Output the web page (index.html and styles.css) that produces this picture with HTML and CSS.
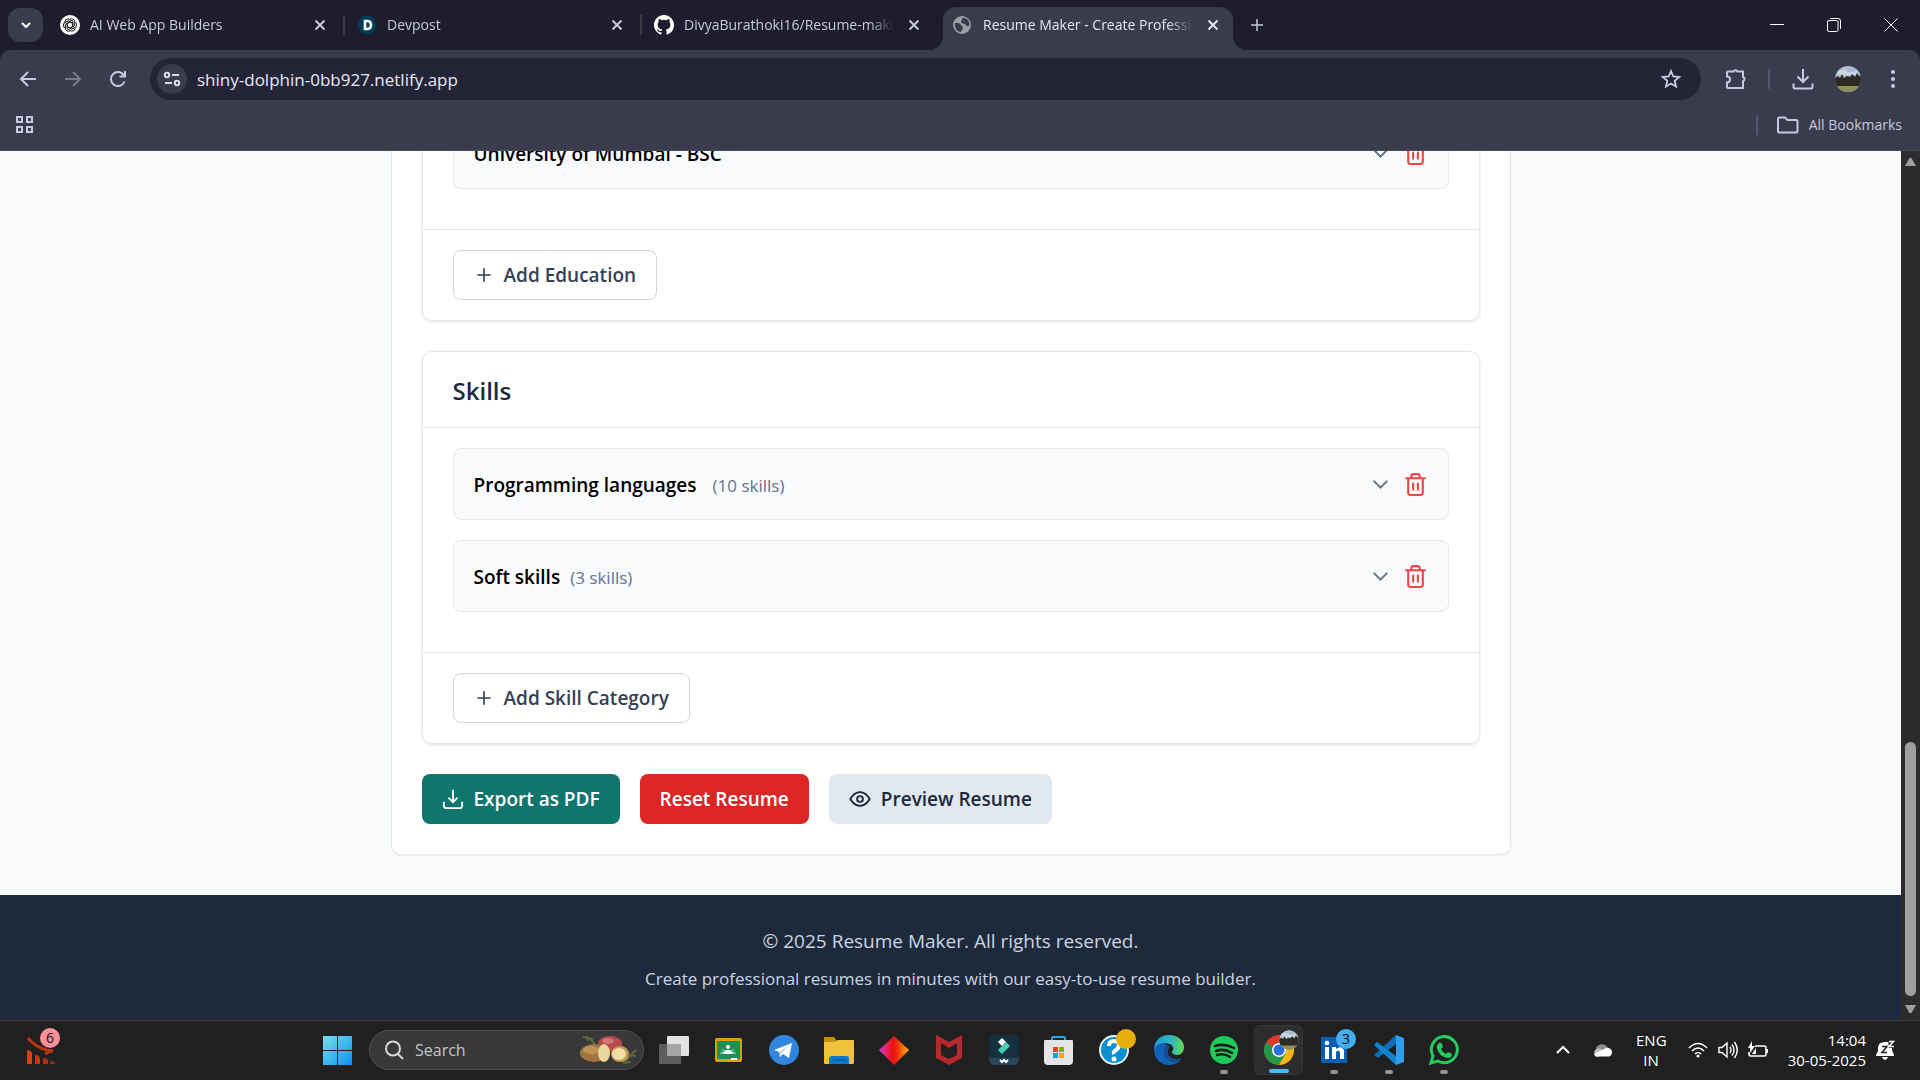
FILE: index.html
```html
<!DOCTYPE html>
<html lang="en">
<head>
  <meta charset="UTF-8" />
  <meta name="viewport" content="width=device-width, initial-scale=1.0"/>
  <title>Resume Maker</title>
  <link rel="stylesheet" href="styles.css">
</head>
<body>
  <!-- Shared icons -->
  <svg class="sprite" aria-hidden="true">
    <symbol id="i-close" viewBox="0 0 12 12"><path d="M1.5 1.5l9 9M10.5 1.5l-9 9"/></symbol>
    <symbol id="i-plus" viewBox="0 0 24 24"><path d="M12 4v16M4 12h16"/></symbol>
    <symbol id="i-chevron" viewBox="0 0 24 24"><path d="M6 9l6 6 6-6" stroke-linecap="round"/></symbol>
    <symbol id="i-trash" viewBox="0 0 24 24"><path d="M3 6h18M19 6v14a2 2 0 0 1-2 2H7a2 2 0 0 1-2-2V6M8 6V4a2 2 0 0 1 2-2h4a2 2 0 0 1 2 2v2M9.700 11v6M14.300 11v6" stroke-linecap="round"/></symbol>
    <symbol id="i-photo" viewBox="0 0 26 26">
      <clipPath id="round"><circle cx="13" cy="13" r="13"/></clipPath>
      <g clip-path="url(#round)">
        <rect width="26" height="26" fill="#a9bdd6"/>
        <path d="M3 5q5-3 9 0t10-1v5H3z" fill="#ccd3dc"/>
        <path d="M0 12l3-2 2 2 2-4 2 4 3-2 3 1 2-3 3 3 2-4 2 3 2-1v12H0z" fill="#2b2a20"/>
        <path d="M0 20h26v6H0z" fill="#8b8f55"/>
      </g>
    </symbol>
  </svg>

  <header class="browser">
    <div class="tab-strip">
      <button class="tab-search" aria-label="Search tabs">
        <svg class="line" width="14" height="14" viewBox="0 0 14 14"><path d="M3 5l4 4 4-4" stroke-width="2"/></svg>
      </button>
      <div class="tab">
        <svg width="20" height="20" viewBox="0 0 20 20">
          <circle cx="10" cy="10" r="10" fill="#fff"/>
          <g fill="none" stroke="#222" stroke-width="1">
            <path id="petal" d="M10 4.200a3 3 0 0 1 4.600 2.400v4l-4.500 2.600-2.600-1.500"/>
            <use href="#petal" transform="rotate(60 10 10)"/>
            <use href="#petal" transform="rotate(120 10 10)"/>
            <use href="#petal" transform="rotate(180 10 10)"/>
            <use href="#petal" transform="rotate(240 10 10)"/>
            <use href="#petal" transform="rotate(300 10 10)"/>
          </g>
        </svg>
        <span class="tab-title">AI Web App Builders</span>
        <button class="tab-close" aria-label="Close tab"><svg class="line" width="12" height="12"><use href="#i-close"/></svg></button>
      </div>
      <div class="tab">
        <svg width="20" height="20" viewBox="0 0 20 20"><path d="M5 1h10l5 9-5 9H5l-5-9z" fill="#003e54"/><path d="M8 6h2q4 0 4 4t-4 4H8z" fill="none" stroke="#fff" stroke-width="2.600"/></svg>
        <span class="tab-title">Devpost</span>
        <button class="tab-close" aria-label="Close tab"><svg class="line" width="12" height="12"><use href="#i-close"/></svg></button>
      </div>
      <div class="tab last">
        <svg width="20" height="20" viewBox="0 0 16 16"><path fill="#fff" d="M8 0C3.580 0 0 3.580 0 8c0 3.540 2.290 6.530 5.470 7.590.4.070.55-.17.55-.38 0-.19-.01-.82-.01-1.490-2.010.37-2.530-.49-2.690-.94-.09-.23-.48-.94-.82-1.130-.28-.15-.68-.52-.01-.53.63-.01 1.080.58 1.230.82.72 1.210 1.870.87 2.330.66.07-.52.28-.87.51-1.070-1.780-.2-3.640-.89-3.640-3.950 0-.87.31-1.590.82-2.150-.08-.2-.36-1.020.08-2.120 0 0 .67-.21 2.200.82a7.600 7.600 0 0 1 4 0c1.530-1.040 2.200-.82 2.200-.82.44 1.100.16 1.920.08 2.120.51.56.82 1.270.82 2.150 0 3.070-1.870 3.750-3.650 3.950.29.25.54.73.54 1.480 0 1.070-.01 1.930-.01 2.200 0 .21.15.46.55.38A8 8 0 0 0 16 8c0-4.420-3.580-8-8-8z"/></svg>
        <span class="tab-title">DivyaBurathoki16/Resume-make</span>
        <button class="tab-close" aria-label="Close tab"><svg class="line" width="12" height="12"><use href="#i-close"/></svg></button>
      </div>
      <div class="tab active">
        <svg width="20" height="20" viewBox="0 0 20 20"><circle cx="9" cy="10" r="9" fill="#9aa0a6"/><path d="M2 8c3 0 5 0 6 2s2 1 2 3-2 2-2 4c-4 0-6.500-4-6-9zM9 3c1 2-1 2-1 4s4 1 5 3 3 1 3.500 0C16.500 5 13 2.500 9 3z" fill="#3a3b4d"/></svg>
        <span class="tab-title">Resume Maker - Create Professio</span>
        <button class="tab-close" aria-label="Close tab"><svg class="line" width="12" height="12"><use href="#i-close"/></svg></button>
      </div>
      <button class="new-tab" aria-label="New tab"><svg class="line" width="18" height="18" stroke-width="3"><use href="#i-plus"/></svg></button>

      <div class="window-controls">
        <button aria-label="Minimize"><svg class="line" width="14" height="14"><path d="M0 6.500h14" stroke-width="1"/></svg></button>
        <button aria-label="Restore"><svg class="line" width="14" height="14"><path d="M.5 4a1.500 1.500 0 0 1 1.500-1.500h7.500a1.500 1.500 0 0 1 1.500 1.500v8a1.500 1.500 0 0 1-1.500 1.500H2a1.500 1.500 0 0 1-1.500-1.500zM3 .5h8a2.500 2.500 0 0 1 2.500 2.500v8" stroke-width="1"/></svg></button>
        <button aria-label="Close"><svg class="line" width="14" height="14"><path d="M.5.5l13 13M13.500.5l-13 13" stroke-width="1"/></svg></button>
      </div>
    </div>

    <div class="toolbar">
      <button class="tool" aria-label="Back"><svg class="line" width="18" height="18"><path d="M17 9H2M9 2L2 9l7 7" stroke-width="2"/></svg></button>
      <button class="tool off" aria-label="Forward"><svg class="line" width="18" height="18"><path d="M1 9h15M9 2l7 7-7 7" stroke-width="2"/></svg></button>
      <button class="tool" aria-label="Reload"><svg class="line" width="18" height="18"><path d="M15.500 11.500A7 7 0 1 1 15 5.500M16 1v5.500h-5.500" stroke-width="2"/></svg></button>

      <div class="address">
        <button class="site-info" aria-label="Site information">
          <svg class="line" width="18" height="18"><g stroke-width="2"><circle cx="4" cy="5" r="2.200"/><path d="M9 5h7M2 13h7"/><circle cx="14" cy="13" r="2.200"/></g></svg>
        </button>
        <input type="text" aria-label="Address" value="shiny-dolphin-0bb927.netlify.app"/>
        <button class="star" aria-label="Bookmark this tab">
          <svg class="line" width="20" height="20" viewBox="0 0 20 20"><path d="M10 2l2.300 5.500 6 .5-4.600 3.900 1.400 5.800L10 14.600l-5.100 3.100 1.400-5.800L1.700 8l6-.5z" stroke-width="1.800"/></svg>
        </button>
      </div>

      <button class="tool" aria-label="Extensions"><svg class="line" width="24" height="24"><path d="M4 4.500h5.500a2.200 2.200 0 0 1 4 0H19v5.500a2.200 2.200 0 0 1 0 4.200V21H4a1 1 0 0 1-1-1v-4.500a2.800 2.800 0 0 0 0-6V5.500a1 1 0 0 1 1-1z" stroke-width="2"/></svg></button>
      <span class="tool-divider"></span>
      <button class="tool" aria-label="Downloads"><svg class="line" width="22" height="22"><path d="M11 1v13M5.500 8.500L11 14l5.500-5.500M1.500 15.500V19a1.500 1.500 0 0 0 1.500 1.500h16a1.500 1.500 0 0 0 1.500-1.500v-3.500" stroke-width="2"/></svg></button>
      <button class="tool" aria-label="Profile"><svg width="26" height="26"><use href="#i-photo"/></svg></button>
      <button class="tool" aria-label="Menu"><svg width="6" height="20" fill="currentColor"><circle cx="3" cy="3" r="2"/><circle cx="3" cy="10" r="2"/><circle cx="3" cy="17" r="2"/></svg></button>
    </div>

    <div class="bookmarks">
      <button class="apps-grid" aria-label="Apps"><svg class="line" width="20" height="20"><path d="M2 2h5v5H2zM12 2h5v5h-5zM2 12h5v5H2zM12 12h5v5h-5z" stroke-width="2"/></svg></button>
      <button class="all-bookmarks">
        <svg class="line" width="22" height="18"><path d="M1 3a1.500 1.500 0 0 1 1.500-1.500H8l2.500 2.500H19a1.500 1.500 0 0 1 1.500 1.500V15a1.500 1.500 0 0 1-1.500 1.500H2.500A1.500 1.500 0 0 1 1 15z" stroke-width="2"/></svg>
        All Bookmarks
      </button>
    </div>
  </header>

  <div class="viewport">
    <div class="page">
      <main class="resume">
        <section class="card">
          <div class="card-body">
            <div class="item">
              <h3>University of Mumbai - BSC</h3>
              <button class="icon-btn" aria-label="Expand"><svg class="line" width="25" height="25"><use href="#i-chevron"/></svg></button>
              <button class="icon-btn danger" aria-label="Delete"><svg class="line" width="25" height="25"><use href="#i-trash"/></svg></button>
            </div>
          </div>
          <div class="card-foot">
            <button class="btn outline"><svg class="line" width="20" height="20"><use href="#i-plus"/></svg>Add Education</button>
          </div>
        </section>

        <section class="card">
          <h2>Skills</h2>
          <div class="card-body">
            <div class="item">
              <h3>Programming languages</h3>
              <span class="count wide">(10 skills)</span>
              <button class="icon-btn" aria-label="Expand"><svg class="line" width="25" height="25"><use href="#i-chevron"/></svg></button>
              <button class="icon-btn danger" aria-label="Delete"><svg class="line" width="25" height="25"><use href="#i-trash"/></svg></button>
            </div>
            <div class="item">
              <h3>Soft skills</h3>
              <span class="count">(3 skills)</span>
              <button class="icon-btn" aria-label="Expand"><svg class="line" width="25" height="25"><use href="#i-chevron"/></svg></button>
              <button class="icon-btn danger" aria-label="Delete"><svg class="line" width="25" height="25"><use href="#i-trash"/></svg></button>
            </div>
          </div>
          <div class="card-foot">
            <button class="btn outline"><svg class="line" width="20" height="20"><use href="#i-plus"/></svg>Add Skill Category</button>
          </div>
        </section>

        <div class="actions">
          <button class="btn export"><svg class="line" width="22" height="22" viewBox="0 0 24 24"><path d="M12 2v13M7 10.500l5 5 5-5M2 15v4a3 3 0 0 0 3 3h14a3 3 0 0 0 3-3v-4"/></svg>Export as PDF</button>
          <button class="btn reset">Reset Resume</button>
          <button class="btn preview"><svg class="line" width="22" height="22" viewBox="0 0 24 24"><path d="M1.500 12S5 4.500 12 4.500 22.500 12 22.500 12 19 19.500 12 19.500 1.500 12 1.500 12z"/><circle cx="12" cy="12" r="3.200"/></svg>Preview Resume</button>
        </div>
      </main>

      <footer class="site-footer">
        <p>© 2025 Resume Maker. All rights reserved.</p>
        <p class="small">Create professional resumes in minutes with our easy-to-use resume builder.</p>
      </footer>
    </div>

    <div class="scrollbar">
      <svg width="13" height="10"><path d="M5.500 1h2L12 9H1z"/></svg>
      <div class="track"><div class="thumb"></div></div>
      <svg width="13" height="10"><path d="M1 1h11L7.500 9h-2z"/></svg>
    </div>
  </div>

  <div class="taskbar">
    <div class="widgets">
      <button class="widget-btn" aria-label="Widgets">
        <svg width="30" height="30">
          <path d="M2 3q7 9 19 12l6 1M19 19l8-4" fill="none" stroke="#b8350f" stroke-width="3"/>
          <path d="M1 15q5 0 5 4v10H1z" fill="#d8400f"/><path d="M9 20q5 0 5 4v5H9z" fill="#c4380f"/><path d="M17 23q5 0 5 3v3h-5z" fill="#b0300f"/><path d="M24 26q5 0 5 3h-5z" fill="#9a290f"/>
        </svg>
        <span class="badge pink">6</span>
      </button>
    </div>

    <button class="app" aria-label="Start">
      <svg width="30" height="30"><defs><linearGradient id="win" x1="0" y1="0" x2="1" y2="1"><stop offset="0" stop-color="#7be0ea"/><stop offset="1" stop-color="#0a8ff5"/></linearGradient><mask id="panes"><path fill="#fff" d="M0 1h14v14H0zM15 1h14v14H15zM0 16h14v14H0zM15 16h14v14H15z"/></mask></defs><rect width="30" height="30" fill="url(#win)" mask="url(#panes)"/></svg>
    </button>

    <label class="search">
      <svg class="line" width="20" height="20"><circle cx="8" cy="8.500" r="7" stroke-width="2"/><path d="M13 14l5 5" stroke-width="2"/></svg>
      <input type="text" placeholder="Search"/>
      <svg width="58" height="30">
        <path d="M4 2q8 0 12 8M8 1l1 5M12 3l2 4M46 27q6-8 11-12M50 20l7 1M44 28l8-1" stroke="#5c6b3a" stroke-width="2" fill="none"/>
        <ellipse cx="31" cy="9" rx="12" ry="8" fill="#b54848"/><ellipse cx="29" cy="6" rx="6" ry="3" fill="#d27874"/>
        <ellipse cx="15" cy="18" rx="14" ry="9" fill="#a3753e"/><ellipse cx="12" cy="15" rx="8" ry="4" fill="#bd9355"/>
        <ellipse cx="25" cy="18" rx="6" ry="9" fill="#ead7a0"/><ellipse cx="41" cy="19" rx="9" ry="8" fill="#c59a50"/><ellipse cx="40" cy="19" rx="7" ry="6" fill="#f0dea6"/>
      </svg>
    </label>

    <button class="app" aria-label="Task view">
      <svg width="30" height="30"><rect x="8" y="1" width="22" height="20" rx="1" fill="#e2e2e2"/><rect y="9" width="22" height="20" rx="1" fill="#5d5d5d"/><path d="M8 9h14v12H8z" fill="#a6a6a6"/></svg>
    </button>
    <button class="app" aria-label="Classroom">
      <svg width="30" height="30"><rect x="1" y="3" width="27" height="24" rx="2" fill="#d9a009"/><rect x="3" y="6" width="23" height="18" fill="#1e8e57"/><circle cx="14" cy="12" r="2" fill="#fff"/><path d="M9 19q0-4 5-4t5 4z" fill="#fff"/><circle cx="9" cy="15" r="1" fill="#8ed0ad"/><circle cx="19" cy="15" r="1" fill="#8ed0ad"/><path d="M6 19q1-3 4-2v2zM22 19q-1-3-4-2v2z" fill="#8ed0ad"/><path d="M17 23h6v2h-6z" fill="#fff"/></svg>
    </button>
    <button class="app" aria-label="Telegram">
      <svg width="30" height="30"><circle cx="15" cy="15" r="15" fill="#2f86dc"/><path d="M5 15l18-7-3 15-6-4-3 3-1-5z" fill="#fff"/><path d="M10 17l9-6-7 8-1 3z" fill="#b9d5ee"/></svg>
    </button>
    <button class="app" aria-label="File Explorer">
      <svg width="30" height="30"><path d="M0 3q0-1 1-1h9l3 4h16v8H0z" fill="#c98f10"/><path d="M0 7h11l3-2h15q1 0 1 1v22q0 1-1 1H1q-1 0-1-1z" fill="#f2c13c"/><path d="M5 29v-5q0-3 3-3h14q3 0 3 3v5z" fill="#0f78cf"/><path d="M9 25h13" stroke="#0a4a8a" stroke-width="1"/></svg>
    </button>
    <button class="app" aria-label="Office">
      <svg width="30" height="30"><defs><linearGradient id="dia"><stop offset="0" stop-color="#d63fd0"/><stop offset=".45" stop-color="#ee1010"/><stop offset=".6" stop-color="#ee2a08"/><stop offset="1" stop-color="#f5ba14"/></linearGradient></defs><path d="M15 1l15 14-15 15L0 15z" fill="url(#dia)"/></svg>
    </button>
    <button class="app" aria-label="McAfee">
      <svg width="30" height="30"><path d="M2 0l13 7 13-7v23l-13 7-13-7zM7 8v12l8 4 8-4V8l-8 5z" fill="#b52a2c" fill-rule="evenodd"/></svg>
    </button>
    <button class="app" aria-label="Filmora">
      <svg width="30" height="30"><rect width="30" height="30" rx="6" fill="#17303f"/><path d="M0 23h30v1a6 6 0 0 1-6 6H6a6 6 0 0 1-6-6z" fill="#2b485b"/><path d="M13 3l4 4-4 4-4-4z" fill="#fff"/><path d="M17 7l4 4-8 8-4-4z" fill="#4ad0ae"/><path d="M11 25l2 2 2-2 2 2 2-2" stroke="#fff" stroke-width="2" fill="none"/></svg>
    </button>
    <button class="app" aria-label="Microsoft Store">
      <svg width="30" height="30"><path d="M8 6V3q0-1 1-1h11q1 0 1 1v3" fill="none" stroke="#26a8dd" stroke-width="2"/><path d="M0 6q0-1 1-1h27q1 0 1 1v20q0 4-4 4H4q-4 0-4-4z" fill="#e4e4e4"/><path d="M9 12h5v5H9z" fill="#e0492a"/><path d="M15 12h5v5h-5z" fill="#78b000"/><path d="M9 18h5v5H9z" fill="#189fe2"/><path d="M15 18h5v5h-5z" fill="#f3a600"/></svg>
    </button>
    <button class="app" aria-label="Help">
      <svg width="30" height="30"><circle cx="15" cy="15" r="14" fill="#0a8fcf" stroke="#e8f2f8" stroke-width="2"/><path d="M10 11q0-5 5-5t5 4q0 3-3 5t-2 4" fill="none" stroke="#fff" stroke-width="4"/><circle cx="15" cy="24" r="2.500" fill="#fff"/></svg>
      <span class="badge gold"></span>
    </button>
    <button class="app" aria-label="Edge">
      <svg width="30" height="30"><defs><linearGradient id="edge"><stop offset="0" stop-color="#2397d8"/><stop offset=".6" stop-color="#2fb9c0"/><stop offset="1" stop-color="#6bd83f"/></linearGradient></defs><path d="M0 15C0 6 6 0 15 0c9 0 15 6 15 12 0 5-3 8-7 8-3 0-5-1-5-3 0-1 2-2 1-5C17 7 6 6 0 15z" fill="url(#edge)"/><path d="M0 15C2 8 9 7 13 10c-4 2-5 12 3 16 5 2 9 0 12-3-3 5-8 7-13 7C6 30 0 23 0 15z" fill="#0f62b8"/><path d="M13 10c-5 3-5 14 3 16 5 2 9 0 12-3-9 3-16-2-14-8 1-3 2-3 1-4z" fill="#174e93"/></svg>
    </button>
    <button class="app running" aria-label="Spotify">
      <svg width="30" height="30"><circle cx="15" cy="15" r="14" fill="#1ecb5a"/><path d="M6 11q9-3 19 2M7 16q8-3 16 2M8 20q7-2 13 2" fill="none" stroke="#1d1d1d" stroke-width="2.500" stroke-linecap="round"/></svg>
    </button>
    <button class="app current" aria-label="Chrome">
      <svg width="30" height="30"><circle cx="15" cy="15" r="15" fill="#e0382e"/><path d="M2 7.500A15 15 0 0 0 15 30l7-11-7-4z" fill="#25964a"/><path d="M15 8h13.300A15 15 0 0 1 15 30l7-12z" fill="#f2b90f"/><circle cx="15" cy="15" r="7" fill="#fff"/><circle cx="15" cy="15" r="5.500" fill="#2a6fe0"/></svg>
      <svg class="badge" width="20" height="20"><use href="#i-photo"/></svg>
    </button>
    <button class="app running" aria-label="LinkedIn">
      <svg width="30" height="30"><rect x="2" y="2" width="26" height="26" rx="1" fill="#0a5fb5"/><path d="M6 12h4v12H6zM13 12h4v2q5-4 8 1v9h-4v-7q-2-3-4 0v7h-4z" fill="#fff"/><circle cx="8" cy="8" r="2.300" fill="#fff"/></svg>
      <span class="badge blue">3</span>
    </button>
    <button class="app running" aria-label="Visual Studio Code">
      <svg width="30" height="30"><path d="M22 0v9L4 23l-4-3z" fill="#0f6fb5"/><path d="M0 10l3-3 19 14v9z" fill="#1583cc"/><path d="M22 0l8 3v24l-8 3z" fill="#2b9fea"/></svg>
    </button>
    <button class="app running" aria-label="WhatsApp">
      <svg width="30" height="30"><path d="M2 28l2-7A13 13 0 1 1 9 26z" fill="none" stroke="#25c95d" stroke-width="3"/><path d="M9 9q2-3 4 0l1 3-2 2q2 4 5 5l2-2 4 2q0 4-4 4-9-1-11-10-1-2 1-4z" fill="#25c95d"/></svg>
    </button>

    <div class="tray">
      <svg class="line" width="14" height="14"><path d="M1 10l6-6 6 6" stroke-width="2"/></svg>
      <svg class="cloud" width="20" height="14"><path d="M3 8a6 5 0 0 1 12-3l-6 4z" fill="#8b8b8b"/><path d="M1 9a5 5 0 0 1 7-3l8 5-13 3z" fill="#c4c4c4"/><path d="M1 11l12-6a4.500 4.500 0 0 1 3 8.500H4a3 3 0 0 1-3-2.500z" fill="#fff"/></svg>
      <div class="lang">ENG<br>IN</div>
      <svg class="line" width="20" height="16"><path d="M1 6q9-9 18 0M4 9q6-6 12 0M7 12q3-3 6 0" stroke-width="1.600"/><circle cx="10" cy="14" r="1.500" fill="#fff" stroke="none"/></svg>
      <svg class="line" width="20" height="18"><path d="M1 6.500h3l5-4.500v14l-5-4.500H1zM12 6q2 3 0 6M14 3.500q4 5.500 0 11M16.500 1q5.500 8 0 16" stroke-width="1.400"/></svg>
      <svg class="line" width="20" height="18"><path d="M7 5h9.500a1.500 1.500 0 0 1 1.500 1.500v7a1.500 1.500 0 0 1-1.500 1.500H2.500A1.500 1.500 0 0 1 1 13.500V11" stroke-width="1.600"/><path d="M4 0v5h3l-5 7V7H0zM4 13l4-6v6zM18 8h2v4h-2z" fill="#fff" stroke="none"/></svg>
      <div class="clock">14:04<br>30-05-2025</div>
      <svg width="20" height="20"><path d="M2 8q0-6 7-6h7v8l2 5v1H0v-1l2-4z" fill="#fff"/><path d="M6 17h6q-1 3-3 3t-3-3z" fill="#fff"/><path d="M6 6.500h5l-5 6h5" stroke="#202020" stroke-width="1.500" fill="none"/><path d="M12 0h8v8h-7z" fill="#202020"/><path d="M13 1.500h4.500l-4.500 5h5" stroke="#fff" stroke-width="1.500" fill="none"/></svg>
    </div>
  </div>
</body>
</html>
```
FILE: styles.css
```css
:root {
  --strip: #1d1d2e;
  --chrome: #3a3b4d;
  --address: #232537;
  --chrome-text: #c8c9de;
  --page-bg: #f8fafc;
  --border: #e2e8f0;
  --slate: #1e293b;
  --taskbar: #202020;
}

* {
  box-sizing: border-box;
  font-family: 'Segoe UI', 'Open Sans', sans-serif;
}

body {
  margin: 0;
  height: 100vh;
  display: flex;
  flex-direction: column;
  overflow: hidden;
}

button {
  border: none;
  padding: 0;
  background: transparent;
  color: inherit;
  cursor: pointer;
  display: flex;
  align-items: center;
  justify-content: center;
}

h2, h3, p {
  margin: 0;
}

svg {
  flex-shrink: 0;
}

.line {
  fill: none;
  stroke: currentColor;
  stroke-width: 2;
}

.sprite {
  position: absolute;
  width: 0;
  height: 0;
}

/* Browser window */
.browser {
  background: var(--strip);
  color: var(--chrome-text);
  font-size: 14px;
}

.tab-strip {
  display: flex;
  align-items: center;
  height: 50px;
  padding-left: 8px;
}

.tab-search {
  width: 35px;
  height: 34px;
  margin-right: 5px;
  border-radius: 12px;
  background: var(--chrome);
  color: #fff;
}

.tab {
  position: relative;
  display: flex;
  align-items: center;
  gap: 10px;
  width: 297px;
  height: 36px;
  padding: 0 15px 0 12px;
}

.tab:not(.last):not(.active)::after {
  content: "";
  position: absolute;
  right: 0;
  width: 2px;
  height: 20px;
  background: var(--chrome);
}

.tab-title {
  flex: 1;
  overflow: hidden;
  white-space: nowrap;
  line-height: 20px;
  mask-image: linear-gradient(to right, #000 88%, transparent);
}

.tab-close {
  width: 20px;
  height: 20px;
}

.tab.active {
  width: 290px;
  height: 43px;
  margin-left: 4px;
  padding: 0 10px 7px 10px;
  align-self: flex-end;
  background: var(--chrome);
  border-radius: 13px 13px 0 0;
  color: #e6e6f2;
}

.tab.active::before,
.tab.active::after {
  content: "";
  position: absolute;
  bottom: 0;
  width: 14px;
  height: 14px;
}

.tab.active::before {
  left: -14px;
  background: radial-gradient(circle at 0 0, transparent 14px, var(--chrome) 14px);
}

.tab.active::after {
  right: -14px;
  background: radial-gradient(circle at 100% 0, transparent 14px, var(--chrome) 14px);
}

.new-tab {
  width: 30px;
  height: 30px;
  margin-left: 9px;
}

.window-controls {
  display: flex;
  margin-left: auto;
  padding-right: 1px;
  color: #fff;
}

.window-controls button {
  width: 57px;
  height: 48px;
}

.toolbar {
  display: flex;
  align-items: center;
  height: 58px;
  padding: 0 5px;
  background: var(--chrome);
  border-radius: 10px 10px 0 0;
}

.tool {
  width: 45px;
  height: 42px;
}

.tool.off {
  color: #77788a;
}

.tool-divider {
  width: 2px;
  height: 20px;
  margin: 0 10px;
  background: #55566b;
}

.address {
  display: flex;
  align-items: center;
  flex: 1;
  height: 42px;
  margin: 0 12px 0 10px;
  padding: 0 20px 0 7px;
  border-radius: 21px;
  background: var(--address);
}

.site-info {
  width: 30px;
  height: 30px;
  border-radius: 50%;
  background: var(--chrome);
  color: #dcdce8;
}

.address input {
  flex: 1;
  border: none;
  outline: none;
  padding: 0 10px;
  background: transparent;
  color: #e8e8f2;
  font-size: 17px;
}

.bookmarks {
  display: flex;
  align-items: center;
  justify-content: space-between;
  height: 43px;
  padding: 0 18px 9px 15px;
  background: var(--chrome);
  border-bottom: 1px solid #48495a;
}

.all-bookmarks {
  gap: 10px;
  height: 20px;
  padding-left: 19px;
  border-left: 2px solid #55566b;
  font-size: 14px;
}

/* Page: scrolled to its end, so the content hangs from the bottom edge */
.viewport {
  flex: 1;
  min-height: 0;
  display: flex;
}

.page {
  flex: 1;
  display: flex;
  flex-direction: column;
  justify-content: flex-end;
  overflow: hidden;
  background: var(--page-bg);
}

.resume {
  width: 1120px;
  max-width: 100%;
  margin: 0 auto 40px;
  padding: 30px;
  background: #fff;
  border: 1px solid var(--border);
  border-radius: 10px;
  box-shadow: 0 1px 2px rgba(0, 0, 0, 0.05);
}

.card {
  margin-bottom: 30px;
  border: 1px solid var(--border);
  border-radius: 10px;
  box-shadow: 0 1px 3px rgba(0, 0, 0, 0.12);
}

.card h2 {
  padding: 21px 30px 19px;
  border-bottom: 1px solid var(--border);
  color: var(--slate);
  font-size: 24px;
  font-weight: 600;
  line-height: 35px;
}

.card-body {
  padding: 20px 30px;
}

.item {
  display: flex;
  align-items: center;
  height: 72px;
  margin-bottom: 20px;
  padding: 0 20px;
  background: var(--page-bg);
  border: 1px solid #e5e7eb;
  border-radius: 8px;
}

.item h3 {
  padding-top: 2px;
  color: #000;
  font-size: 19px;
  font-weight: 600;
  line-height: 30px;
}

.count {
  margin-left: 10px;
  padding-top: 2px;
  color: #64748b;
  font-size: 17px;
}

.count.wide {
  margin-left: 16px;
}

.icon-btn {
  margin-left: 10px;
  color: #64748b;
}

.item .icon-btn:nth-last-child(2) {
  margin-left: auto;
}

.icon-btn.danger {
  color: #ef4444;
}

.card-foot {
  padding: 20px 30px;
  border-top: 1px solid var(--border);
}

.btn {
  height: 50px;
  padding: 0 20px;
  gap: 10px;
  border-radius: 8px;
  font-size: 19px;
  font-weight: 600;
}

.outline {
  border: 1px solid #cbd5e1;
  background: #fff;
  color: #334155;
}

.actions {
  display: flex;
  gap: 20px;
}

.export {
  background: #0f766e;
  color: #fff;
}

.reset {
  background: #dc2626;
  color: #fff;
}

.preview {
  background: var(--border);
  color: var(--slate);
}

.site-footer {
  padding: 31px 30px 29px;
  background: var(--slate);
  color: #cbd5e1;
  text-align: center;
  font-size: 19px;
  line-height: 30px;
}

.site-footer .small {
  margin-top: 10px;
  font-size: 17px;
  line-height: 25px;
}

.scrollbar {
  width: 19px;
  padding: 6px 0;
  display: flex;
  flex-direction: column;
  align-items: center;
  gap: 8px;
  background: #2c2c2c;
  fill: #9f9f9f;
}

.track {
  flex: 1;
  display: flex;
  align-items: flex-end;
}

.thumb {
  width: 11px;
  height: 31%;
  border-radius: 6px;
  background: #9f9f9f;
}

/* Taskbar */
.taskbar {
  display: flex;
  align-items: center;
  height: 60px;
  padding-bottom: 1px;
  background: var(--taskbar);
  border-top: 1px solid #3c3c3c;
  color: #fff;
  font-size: 15px;
}

.widgets {
  flex: 0 0 310px;
  padding-left: 26px;
}

.widget-btn,
.app {
  position: relative;
}

.app {
  width: 55px;
  height: 50px;
}

.badge {
  position: absolute;
  top: 4px;
  right: 5px;
  width: 20px;
  height: 20px;
  border-radius: 50%;
  color: #111;
  font-size: 14px;
  line-height: 20px;
}

.widget-btn .badge {
  top: -7px;
  right: -4px;
}

.pink { background: #fb8f9a; }
.gold { background: #e8ae0c; }
.blue { background: #42aef0; }

.search {
  display: flex;
  align-items: center;
  width: 275px;
  height: 40px;
  margin: 0 2px 0 4px;
  padding: 0 6px 0 15px;
  border: 1px solid #505050;
  border-radius: 20px;
  background: #383838;
  color: #d6d6d6;
}

.search input {
  flex: 1;
  min-width: 0;
  padding: 0 10px;
  border: none;
  outline: none;
  background: transparent;
  color: #fff;
  font-size: 16px;
}

.search input::placeholder {
  color: #c4c4c4;
}

.running::after,
.current::after {
  content: "";
  position: absolute;
  bottom: 1px;
  width: 8px;
  height: 4px;
  border-radius: 2px;
  background: #939393;
}

.current {
  width: 49px;
  margin: 0 3px;
  border: 1px solid #373737;
  border-radius: 6px;
  background: #2d2d2d;
}

.current::after {
  width: 20px;
  background: #4cb8f8;
}

.current .badge {
  right: 3px;
}

.tray {
  display: flex;
  align-items: center;
  gap: 10px;
  margin-left: auto;
  padding-right: 24px;
  line-height: 20px;
}

.cloud {
  margin-left: 13px;
}

.lang {
  width: 30px;
  margin: 0 12px 0 13px;
  text-align: center;
}

.clock {
  width: 80px;
  margin-left: 8px;
  text-align: right;
  white-space: nowrap;
}
```
